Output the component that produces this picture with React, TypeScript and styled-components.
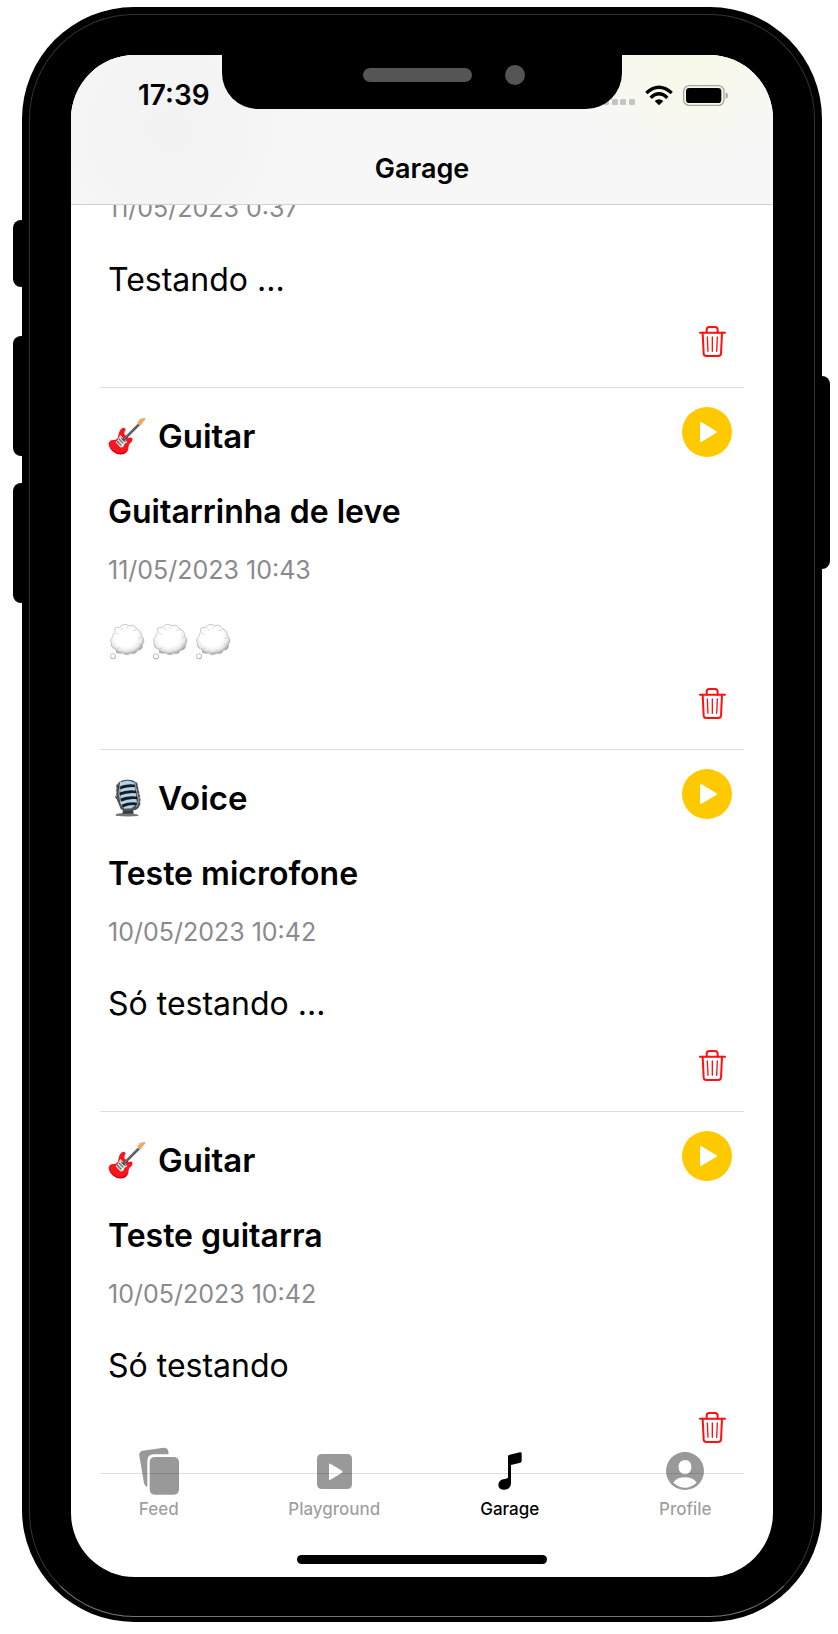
import React from "react";
import styled, { createGlobalStyle } from "styled-components";

const GlobalStyle = createGlobalStyle`
  * { box-sizing: border-box; }
  body {
    margin: 0;
    background: #fff;
    color: #000;
    font-family: Inter, "Liberation Sans", sans-serif;
  }
  h1, h2, h3, p { margin: 0; }
  button { padding: 0; border: 0; background: none; cursor: pointer; }
  svg { display: block; }
`;

const Stage = styled.div`
  display: flex;
  height: 100vh;
  min-height: 900px;
  padding: 7px 16px 12px 22px;
`;

const Phone = styled.div`
  position: relative;
  flex: 1;
  display: flex;
  padding: 7px 7px 5px;
  border-radius: 112px;
  background: #000;
`;

const SideKey = styled.span<{ $side: "left" | "right"; $top: number; $length: number }>`
  position: absolute;
  top: ${(p) => p.$top}px;
  ${(p) => p.$side}: -${(p) => (p.$side === "left" ? 9 : 8)}px;
  width: 9px;
  height: ${(p) => p.$length}px;
  border-radius: ${(p) => (p.$side === "left" ? "8px 0 0 8px" : "0 8px 8px 0")};
  background: #000;
`;

const Bezel = styled.div`
  flex: 1;
  display: flex;
  min-width: 0;
  padding: 40px 41px 39px;
  border: 1px solid #333;
  border-bottom-color: #777;
  border-radius: 105px;
`;

const Screen = styled.div`
  position: relative;
  flex: 1;
  display: flex;
  flex-direction: column;
  min-width: 0;
  overflow: hidden;
  border-radius: 64px;
  background: #fff;
`;

const Header = styled.header`
  flex: none;
  border-bottom: 1px solid #d2d2d2;
  background:
    radial-gradient(circle at 88% 0, #f8f9e6 0, transparent 18%),
    radial-gradient(circle at 14% 50%, #f2f2f2 0, transparent 26%),
    #f7f7f7;
`;

const StatusBar = styled.div`
  display: flex;
  align-items: center;
  justify-content: space-between;
  height: 80px;
  padding: 0 45px 0 67px;
`;

const Clock = styled.time`
  font-size: 28px;
  line-height: 32px;
  font-weight: 600;
`;

const StatusIcons = styled.div`
  display: flex;
  align-items: center;
  gap: 10px;
`;

const PageTitle = styled.h1`
  padding: 18px 0 19px;
  font-size: 27px;
  line-height: 32px;
  font-weight: 600;
  text-align: center;
`;

const Notch = styled.div`
  position: absolute;
  top: -1px;
  left: 50%;
  display: flex;
  align-items: center;
  gap: 33px;
  width: 400px;
  height: 55px;
  padding: 0 97px 14px 141px;
  margin-left: -200px;
  border-radius: 0 0 36px 36px;
  background: #000;
`;

const Speaker = styled.span`
  flex: 1;
  height: 14px;
  border-radius: 7px;
  background: #555;
`;

const Camera = styled.span`
  width: 20px;
  height: 20px;
  border-radius: 50%;
  background: #555;
`;

const Feed = styled.main`
  flex: 1;
  display: flex;
  flex-direction: column;
  justify-content: flex-end;
  min-height: 0;
  overflow: hidden;
  padding: 0 29px 103px;
`;

const Card = styled.article`
  flex: none;
  display: flex;
  flex-direction: column;
  padding: 19px 12px 30px 8px;
  border-bottom: 1px solid #dedede;
`;

const CardTop = styled.div`
  display: flex;
  align-items: center;
  justify-content: space-between;
  height: 50px;
  margin-bottom: 35px;
`;

const Instrument = styled.h2`
  display: flex;
  align-items: center;
  gap: 12px;
  padding-top: 8px;
  font-size: 33px;
  line-height: 40px;
  font-weight: 600;
`;

const CardTitle = styled.h3`
  margin-bottom: 22px;
  font-size: 32px;
  line-height: 40px;
  font-weight: 600;
`;

const CardDate = styled.time`
  margin-bottom: 36px;
  color: #8a8a8e;
  font-size: 25px;
  line-height: 32px;
`;

const CardText = styled.p`
  display: flex;
  align-items: center;
  gap: 5px;
  height: 40px;
  margin-bottom: 26px;
  font-size: 32px;
  line-height: 40px;
`;

const DeleteButton = styled.button`
  display: flex;
  justify-content: center;
  align-self: flex-end;
  width: 40px;
`;

const TabBar = styled.nav`
  position: absolute;
  right: 0;
  bottom: 0;
  left: 0;
  padding-bottom: 13px;
`;

const Tabs = styled.div`
  display: flex;
  margin-bottom: 36px;
`;

const Tab = styled.button<{ $active?: boolean }>`
  flex: 1;
  display: flex;
  flex-direction: column;
  align-items: center;
  gap: 4px;
  color: ${(p) => (p.$active ? "#000" : "rgba(0, 0, 0, 0.4)")};
  font-family: inherit;
  font-size: 17px;
  line-height: 20px;
  font-weight: 500;
`;

const TabIcon = styled.span`
  display: flex;
  align-items: center;
  height: 48px;
`;

const HomeIndicator = styled.div`
  width: 250px;
  height: 9px;
  margin: 0 auto;
  border-radius: 5px;
  background: #000;
`;

const SignalIcon = () => (
  <svg width="32" height="20" viewBox="0 0 32 20" fill="#c4c4c4" aria-hidden="true">
    {[0, 9, 17, 26].map((x) => (
      <rect key={x} x={x} y="14" width="6" height="6" rx="1.5" />
    ))}
  </svg>
);

const WifiIcon = () => (
  <svg width="28" height="21" viewBox="0 0 84 63" fill="none" stroke="#000" strokeWidth="10" aria-hidden="true">
    <path d="M4 24 Q42 -11 80 24" />
    <path d="M17 38 Q42 15 67 38" />
    <path d="M42 61 L29 48 Q42 37 55 48 Z" fill="#000" stroke="none" />
  </svg>
);

const BatteryIcon = () => (
  <svg width="45" height="21" viewBox="0 0 135 63" aria-hidden="true">
    <rect x="2" y="2" width="121" height="59" rx="17" fill="none" stroke="#a6a6a0" strokeWidth="4" />
    <rect x="9" y="9" width="106" height="45" rx="10" fill="#000" />
    <path d="M128 22 Q135 25 135 32 Q135 39 128 42 Z" fill="#a6a6a0" />
  </svg>
);

const TrashIcon = () => (
  <svg width="27" height="31" viewBox="0 0 81 93" fill="none" stroke="#ff1010" strokeLinecap="round" strokeLinejoin="round" aria-hidden="true">
    <path d="M3 20 H78" strokeWidth="6" />
    <path d="M23 20 V11 Q23 3 31 3 H48 Q56 3 56 11 V20" strokeWidth="6" />
    <path d="M11 20 L14 83 Q15 90 22 90 H58 Q65 90 66 83 L69 20" strokeWidth="6" />
    <path d="M25 33 L27 76 M40 33 V76 M55 33 L53 76" strokeWidth="4" />
  </svg>
);

const PlayIcon = () => (
  <svg width="50" height="50" viewBox="0 0 50 50" aria-hidden="true">
    <circle cx="25" cy="25" r="25" fill="#ffc900" />
    <path d="M19 16 L34 25 L19 34 Z" fill="#fff" stroke="#fff" strokeWidth="2" strokeLinejoin="round" />
  </svg>
);

const GuitarIcon = () => (
  <svg width="38" height="38" viewBox="0 0 114 114" aria-hidden="true">
    <path d="M43 33 Q51 30 53 37 Q49 44 49 52 Q56 59 62 63 Q70 59 74 66 Q73 75 65 80 Q60 87 61 96 Q58 109 42 112 Q25 114 13 103 Q1 91 2 79 Q5 68 17 69 Q30 68 31 56 Q33 40 43 33Z" fill="#f8151d" />
    <path d="M7 91 Q20 109 39 109 Q54 107 58 96 Q57 112 39 112 Q16 111 7 91Z" fill="#b80011" />
    <path d="M37 54 L58 76 L49 81 Q48 93 37 91 L23 76 Q30 70 33 61Z" fill="#ececec" />
    <path d="M38 56 L27 76 L42 89" fill="none" stroke="#b6a9aa" strokeWidth="2" />
    <path d="M45 70 L95 20" stroke="#515151" strokeWidth="8" />
    <path d="M47 67 L93 19" stroke="#929292" strokeWidth="2" />
    <path d="M52 66 L56 70 M61 57 L65 61 M70 48 L74 52 M79 39 L83 43" stroke="#c9c9c9" strokeWidth="1" />
    <path d="M28 73 L40 85 M34 67 L46 79 M40 62 L52 74" stroke="#444" strokeWidth="4" strokeDasharray="4 1" />
    <path d="M88 17 L94 10 Q94 5 101 6 L109 2 L113 7 L105 15 L99 25 L91 23Z" fill="#f5a665" />
    <path d="M88 11 L92 15 M94 6 L98 10 M101 3 L104 7" stroke="#b7b7b7" strokeWidth="3" />
  </svg>
);

const MicIcon = () => (
  <svg width="38" height="38" viewBox="0 0 114 114" aria-hidden="true">
    <path d="M24 105 Q48 99 82 105 L91 107 V111 Q55 114 23 110Z" fill="#70777b" />
    <path d="M46 89 L74 87 L77 104 H43Z" fill="#38383a" />
    <path d="M27 18 Q32 3 55 2 Q84 1 88 17 L96 72 Q94 91 79 94 L54 97 Q39 92 34 79 L25 57Z" fill="#4a5359" />
    <path d="M36 11 Q59 -1 79 11 L87 73 L71 88 L49 89 L38 73Z" fill="#b4d2ea" />
    <path d="M31 23 Q57 12 84 17 L85 25 Q59 21 32 32Z M32 41 Q60 30 86 35 L87 43 Q62 39 33 50Z M35 59 Q62 49 89 53 L90 61 Q64 57 38 68Z M40 77 Q65 67 90 71 L88 79 Q65 76 46 85Z" fill="#171c21" />
    <path d="M38 5 L33 42 L40 80 M80 8 L92 65 L85 84" fill="none" stroke="#e0edf6" strokeWidth="2" />
    <path d="M27 17 L28 49 L24 54 L33 68 L38 85 L49 99 M85 11 L95 59 L94 78 L81 91" fill="none" stroke="#55504f" strokeWidth="5" strokeDasharray="9 3" />
  </svg>
);

const ThoughtIcon = () => (
  <svg width="38" height="36" viewBox="-7 0 114 108" aria-hidden="true">
    <defs>
      <radialGradient id="cloudShade" cx="46%" cy="40%" r="60%">
        <stop offset="0.55" stopColor="#fff" />
        <stop offset="0.8" stopColor="#e9e9e9" />
        <stop offset="1" stopColor="#9c9c9c" />
      </radialGradient>
    </defs>
    <path d="M15 25 Q6 9 27 10 Q40 -5 55 5 Q72 -1 79 15 Q95 20 94 36 Q106 48 97 61 Q98 78 81 79 Q77 92 61 88 Q48 97 37 87 Q18 92 16 75 Q0 73 3 57 Q-4 45 8 38 Q5 29 15 25Z" fill="url(#cloudShade)" stroke="#b4b4b4" strokeWidth="2" />
    <path d="M30 12 Q38 14 38 20 M55 6 Q50 9 50 14 M79 15 Q74 21 67 20 M94 36 Q91 44 84 43 M15 25 Q18 31 25 31 M97 61 Q91 65 84 60 M16 75 Q24 76 29 70 M61 88 Q57 82 60 77 M37 87 Q34 82 36 78" fill="none" stroke="#c6c6c6" strokeWidth="2" />
    <circle cx="8" cy="97" r="8" fill="url(#cloudShade)" stroke="#a6a6a6" strokeWidth="2" />
    <circle cx="21" cy="84" r="4" fill="#b0b0b0" />
  </svg>
);

const FeedIcon = () => (
  <svg width="40" height="48" viewBox="0 0 120 144" fill="currentColor" aria-hidden="true">
    <path d="M1 26 Q-1 14 11 11 L73 2 Q87 1 88 14 L89 22 H44 Q25 22 25 42 V119 Q17 118 15 109Z" />
    <rect x="32" y="30" width="88" height="113" rx="15" />
  </svg>
);

const PlaygroundIcon = () => (
  <svg width="35" height="35" viewBox="0 0 105 105" fill="currentColor" fillRule="evenodd" aria-hidden="true">
    <path d="M15 0 H90 Q105 0 105 15 V90 Q105 105 90 105 H15 Q0 105 0 90 V15 Q0 0 15 0Z M36 31 V75 Q36 79 40 77 L75 56 Q78 53 75 50 L40 29 Q36 27 36 31Z" />
  </svg>
);

const NoteIcon = () => (
  <svg width="24" height="38" viewBox="0 0 72 114" fill="currentColor" aria-hidden="true">
    <path d="M30 13 Q30 9 35 8 L66 1 Q71 0 71 5 V27 Q71 31 67 32 L39 39 V94 Q38 112 19 113 Q1 113 1 98 Q2 83 20 81 Q30 80 30 76Z" />
  </svg>
);

const ProfileIcon = () => (
  <svg width="38" height="38" viewBox="0 0 114 114" fill="currentColor" fillRule="evenodd" aria-hidden="true">
    <path d="M57 0 A57 57 0 1 1 57 114 A57 57 0 1 1 57 0Z M57 24 C45 24 37 33 38 46 C38 58 46 67 57 67 C68 67 76 58 76 46 C77 33 69 24 57 24Z M22 92 Q40 107 57 107 Q74 107 92 92 Q82 76 57 76 Q32 76 22 92Z" />
  </svg>
);

type Recording = {
  instrument?: "Guitar" | "Voice";
  title?: string;
  date: string;
  text?: string;
};

const recordings: Recording[] = [
  { date: "11/05/2023 0:37", text: "Testando ..." },
  { instrument: "Guitar", title: "Guitarrinha de leve", date: "11/05/2023 10:43" },
  { instrument: "Voice", title: "Teste microfone", date: "10/05/2023 10:42", text: "Só testando ..." },
  { instrument: "Guitar", title: "Teste guitarra", date: "10/05/2023 10:42", text: "Só testando" },
];

const tabs = [
  { label: "Feed", icon: <FeedIcon /> },
  { label: "Playground", icon: <PlaygroundIcon /> },
  { label: "Garage", icon: <NoteIcon />, active: true },
  { label: "Profile", icon: <ProfileIcon /> },
];

const RecordingCard = ({ instrument, title, date, text }: Recording) => (
  <Card>
    {instrument && (
      <CardTop>
        <Instrument>
          {instrument === "Guitar" ? <GuitarIcon /> : <MicIcon />}
          {instrument}
        </Instrument>
        <button type="button" aria-label="Play">
          <PlayIcon />
        </button>
      </CardTop>
    )}
    {title && <CardTitle>{title}</CardTitle>}
    <CardDate>{date}</CardDate>
    <CardText>
      {text ?? (
        <>
          <ThoughtIcon />
          <ThoughtIcon />
          <ThoughtIcon />
        </>
      )}
    </CardText>
    <DeleteButton type="button" aria-label="Delete">
      <TrashIcon />
    </DeleteButton>
  </Card>
);

export default function App() {
  return (
    <>
      <GlobalStyle />
      <Stage>
        <Phone>
          <SideKey $side="left" $top={213} $length={67} />
          <SideKey $side="left" $top={329} $length={120} />
          <SideKey $side="left" $top={476} $length={120} />
          <SideKey $side="right" $top={369} $length={193} />
          <Bezel>
            <Screen>
              <Header>
                <StatusBar>
                  <Clock>17:39</Clock>
                  <StatusIcons>
                    <SignalIcon />
                    <WifiIcon />
                    <BatteryIcon />
                  </StatusIcons>
                </StatusBar>
                <PageTitle>Garage</PageTitle>
              </Header>
              <Notch>
                <Speaker />
                <Camera />
              </Notch>
              <Feed>
                {recordings.map((recording, index) => (
                  <RecordingCard key={index} {...recording} />
                ))}
              </Feed>
              <TabBar>
                <Tabs>
                  {tabs.map((tab) => (
                    <Tab key={tab.label} type="button" $active={tab.active}>
                      <TabIcon>{tab.icon}</TabIcon>
                      {tab.label}
                    </Tab>
                  ))}
                </Tabs>
                <HomeIndicator />
              </TabBar>
            </Screen>
          </Bezel>
        </Phone>
      </Stage>
    </>
  );
}
